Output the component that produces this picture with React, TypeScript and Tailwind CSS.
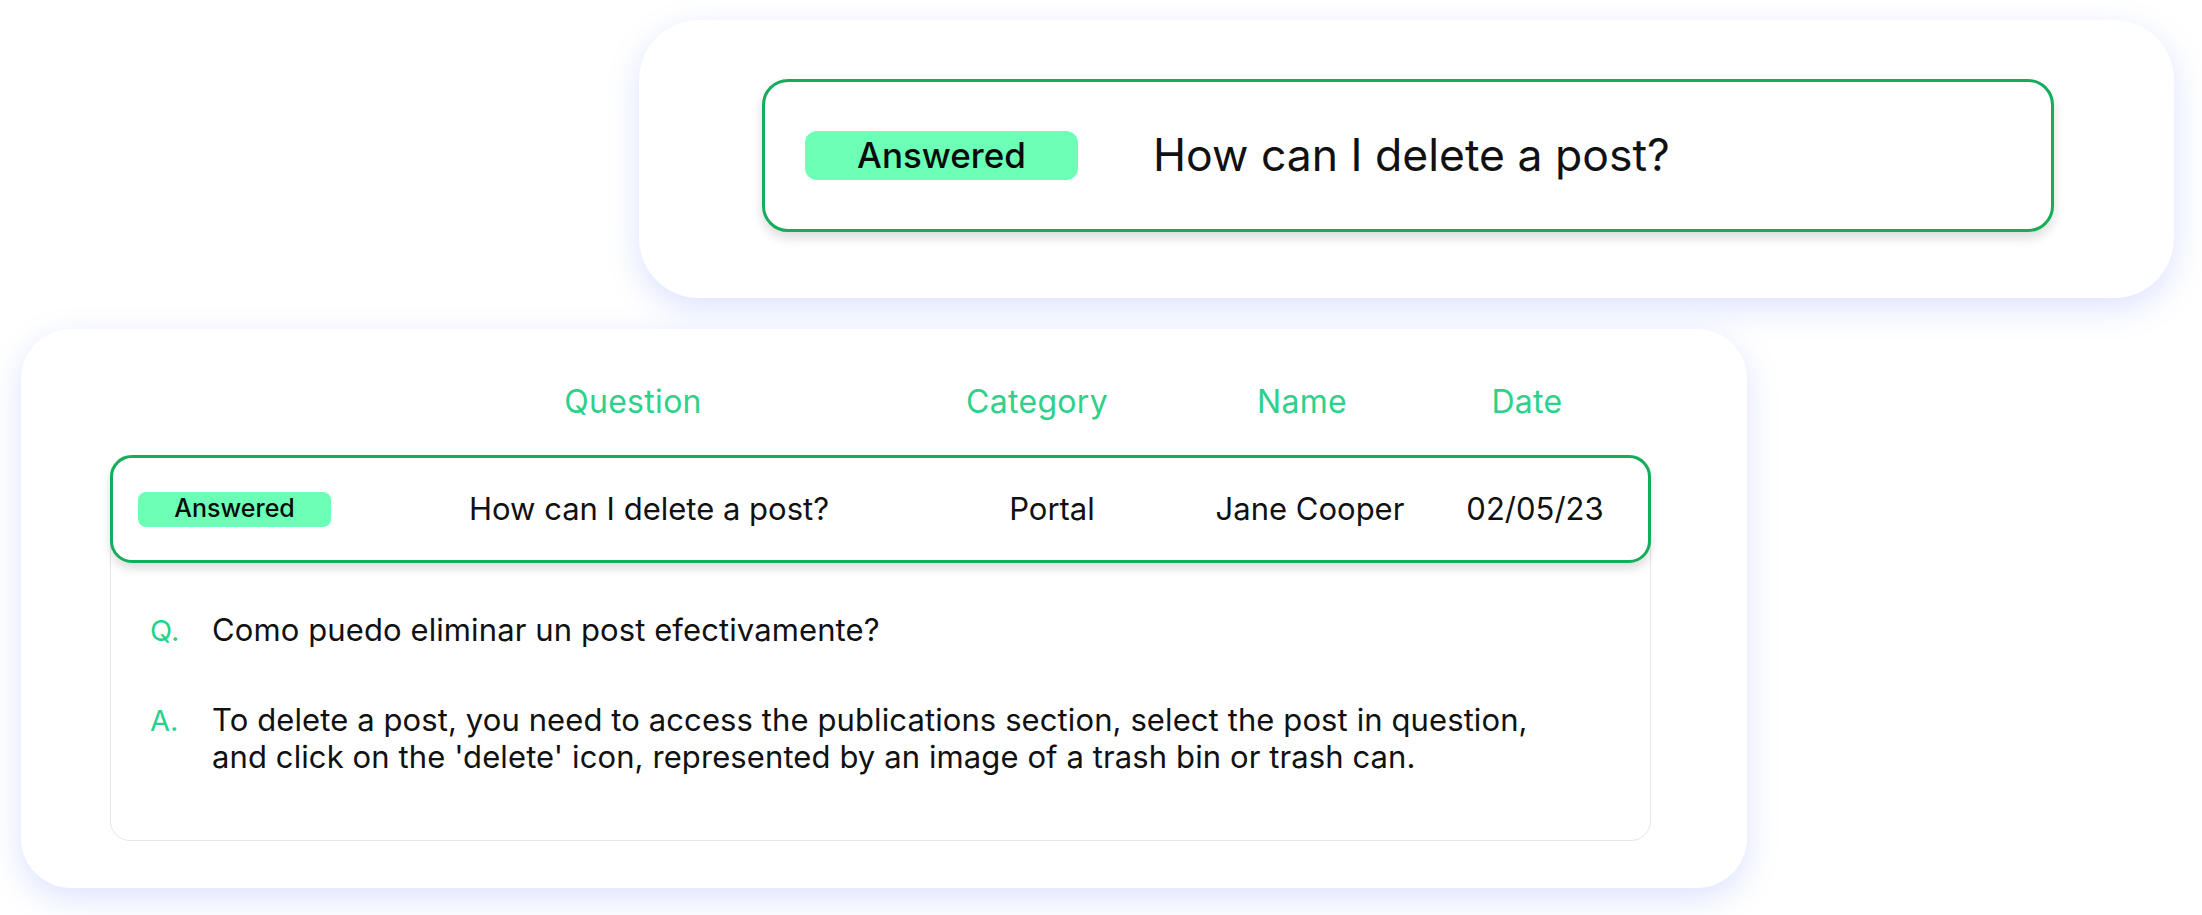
import React from "react";

const font = "font-['Inter','Noto_Sans',sans-serif]";

const Badge = ({ big }: { big?: boolean }) =>
  big ? (
    <span className="flex h-[49px] w-[273px] shrink-0 items-center justify-center rounded-[12px] bg-[#6cffb6] text-[35px] font-medium text-[#0b0b0b]">
      Answered
    </span>
  ) : (
    <span className="flex h-[35px] w-[193px] shrink-0 items-center justify-center rounded-[8px] bg-[#6cffb6] text-[25px] font-medium text-[#0b0b0b]">
      Answered
    </span>
  );

export default function App() {
  return (
    <main className={`min-h-screen w-full bg-white pt-[20px] ${font}`}>
      {/* top preview card */}
      <section className="ml-[639px] h-[278px] w-[1535px] rounded-[60px] bg-white pl-[123px] pr-[120px] pt-[59px] shadow-[0_10px_32px_rgba(95,125,255,0.22)]">
        <div className="flex h-[153px] items-center rounded-[26px] border-[3px] border-[#13ad5b] bg-white pl-[40px] shadow-[0_6px_12px_rgba(0,0,0,0.14)]">
          <Badge big />
          <p className="ml-[75px] text-[44.5px] font-normal text-[#111]">How can I delete a post?</p>
        </div>
      </section>

      {/* table card */}
      <section className="ml-[21px] mt-[31px] h-[559px] w-[1726px] rounded-[50px] bg-white pl-[89px] pr-[96px] pt-[51px] shadow-[0_10px_32px_rgba(95,125,255,0.22)]">
        <div className="grid h-[44px] grid-cols-[260px_526px_282px_248px_202px] items-center text-center text-[32px] leading-[44px] tracking-[0.3px] text-[#2fd08a]">
          <span />
          <span>Question</span>
          <span>Category</span>
          <span>Name</span>
          <span>Date</span>
        </div>

        <div className="mt-[31px] h-[386px] rounded-[20px] border border-[#e6e6e6] bg-white">
          <div className="-mx-px -mt-px grid h-[108px] grid-cols-[257px_558px_248px_268px_182px] items-center rounded-[22px] border-[3px] border-[#13ad5b] bg-white text-center text-[31px] text-[#111] shadow-[0_6px_10px_rgba(0,0,0,0.13)]">
            <div className="pl-[25px]">
              <Badge />
            </div>
            <span>How can I delete a post?</span>
            <span>Portal</span>
            <span>Jane Cooper</span>
            <span>02/05/23</span>
          </div>

          <div className="flex flex-col gap-[52px] pl-[39px] pt-[48px] text-[31px] leading-[37px] tracking-[0.1px] text-[#111]">
            <div className="flex items-baseline">
              <span className="w-[62px] shrink-0 text-[29px] text-[#22d38b]">Q.</span>
              <p>Como puedo eliminar un post efectivamente?</p>
            </div>
            <div className="flex items-baseline">
              <span className="w-[62px] shrink-0 text-[29px] text-[#22d38b]">A.</span>
              <p className="max-w-[1340px]">
                To delete a post, you need to access the publications section, select the post in question,
                and click on the 'delete' icon, represented by an image of a trash bin or trash can.
              </p>
            </div>
          </div>
        </div>
      </section>
    </main>
  );
}
